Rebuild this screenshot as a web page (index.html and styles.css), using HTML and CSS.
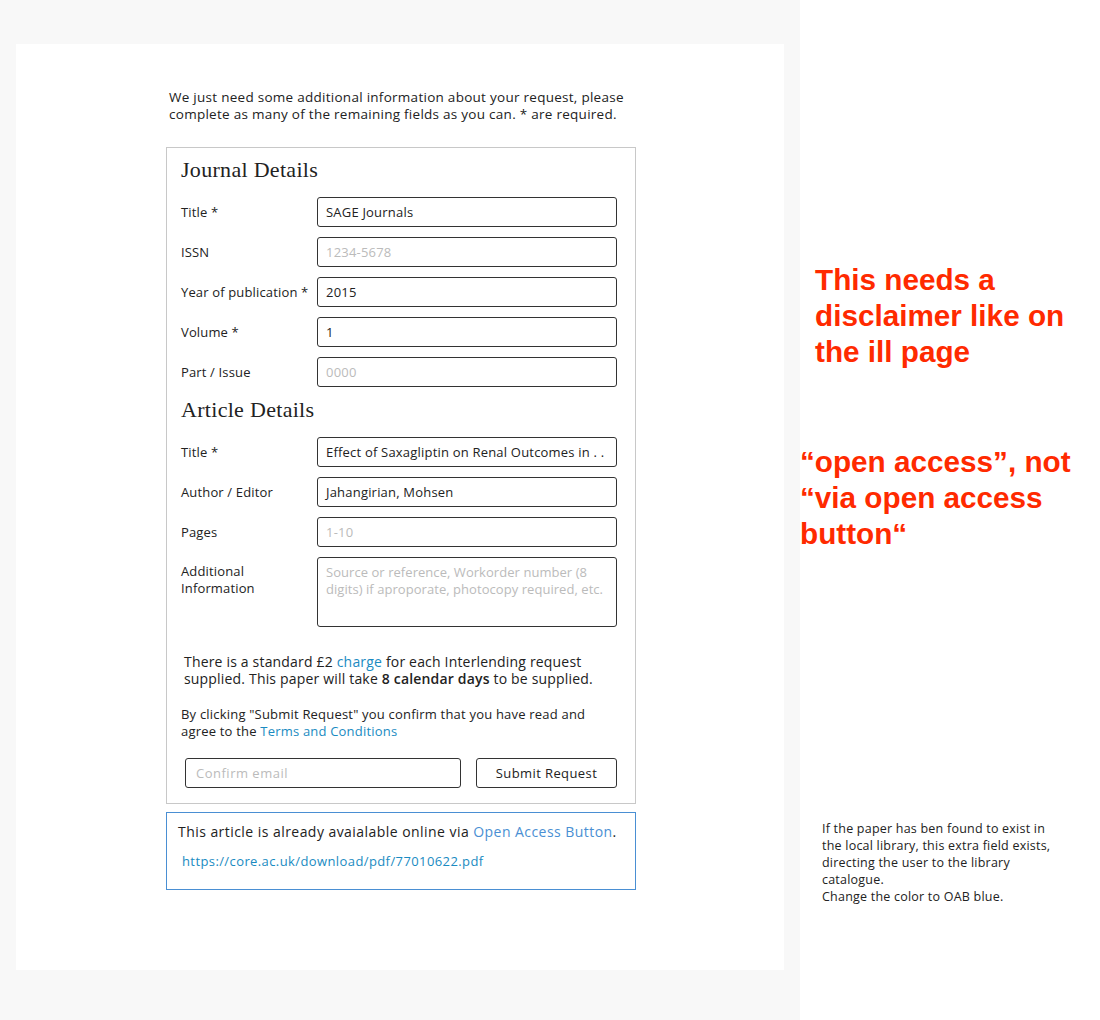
FILE: index.html
```html
<!DOCTYPE html>
<html>
<head>
<meta charset="utf-8">
<link rel="stylesheet" href="styles.css">
</head>
<body>
<div class="page">
  <div class="canvas">
    <div class="card">
      <div class="form-wrap">
        <p class="intro">We just need some additional information about your request, please<br>complete as many of the remaining fields as you can. * are required.</p>
        <div class="form-box">
          <h2 class="section">Journal Details</h2>
          <div class="rows">
            <div class="row"><span class="label">Title *</span><div class="field">SAGE Journals</div></div>
            <div class="row"><span class="label">ISSN</span><div class="field ph">1234-5678</div></div>
            <div class="row"><span class="label">Year of publication *</span><div class="field">2015</div></div>
            <div class="row"><span class="label">Volume *</span><div class="field">1</div></div>
            <div class="row"><span class="label">Part / Issue</span><div class="field ph">0000</div></div>
          </div>
          <h2 class="section second">Article Details</h2>
          <div class="rows">
            <div class="row"><span class="label">Title *</span><div class="field">Effect of Saxagliptin on Renal Outcomes in . .</div></div>
            <div class="row"><span class="label">Author / Editor</span><div class="field">Jahangirian, Mohsen</div></div>
            <div class="row"><span class="label">Pages</span><div class="field ph">1-10</div></div>
            <div class="row tall"><span class="label">Additional<br>Information</span><div class="field area ph">Source or reference, Workorder number (8<br>digits) if aproporate, photocopy required, etc.</div></div>
          </div>
          <p class="charge">There is a standard £2 <a class="link">charge</a> for each Interlending request<br>supplied. This paper will take <b>8 calendar days</b> to be supplied.</p>
          <p class="terms">By clicking "Submit Request" you confirm that you have read and<br>agree to the <a class="link">Terms and Conditions</a></p>
          <div class="submit-row">
            <div class="field ph email">Confirm email</div>
            <div class="button">Submit Request</div>
          </div>
        </div>
        <div class="oab-box">
          <p class="oab-text">This article is already avaialable online via <a class="oab-link">Open Access Button</a>.</p>
          <a class="link url">https://core.ac.uk/download/pdf/77010622.pdf</a>
        </div>
      </div>
    </div>
  </div>
  <div class="notes">
    <p class="red first">This needs a<br>disclaimer like on<br>the ill page</p>
    <p class="red second">“open access”, not<br>“via open access<br>button“</p>
    <p class="note">If the paper has ben found to exist in<br>the local library, this extra field exists,<br>directing the user to the library<br>catalogue.<br>Change the color to OAB blue.</p>
  </div>
</div>
</body>
</html>
```

FILE: styles.css
```css
html, body {
  margin: 0;
  padding: 0;
  background: #ffffff;
}
body {
  font-family: "Open Sans", Lato, sans-serif;
  color: #222;
  letter-spacing: 0.2px;
}
p { margin: 0; }
.page {
  display: flex;
  width: 1100px;
  height: 1020px;
}
.canvas {
  width: 800px;
  background: #f8f8f8;
  padding: 44px 16px 50px 16px;
  box-sizing: border-box;
}
.card {
  background: #fff;
  height: 926px;
  padding: 45px 0 0 150px;
  box-sizing: border-box;
}
.form-wrap {
  width: 470px;
}
.intro {
  font-size: 13.5px;
  line-height: 17px;
  letter-spacing: 0.27px;
  padding-left: 3px;
  margin-bottom: 24px;
  white-space: nowrap;
}
.form-box {
  border: 1px solid #c8c8c8;
  padding: 9px 18px 15px 14px;
}
.section {
  font-family: "Liberation Serif", "DejaVu Serif", serif;
  font-weight: normal;
  font-size: 22px;
  line-height: 26px;
  letter-spacing: 0.3px;
  margin: 0 0 14px 0;
  color: #222;
}
.section.second {
  margin-top: 10px;
}
.rows {
  display: flex;
  flex-direction: column;
  gap: 10px;
}
.row {
  display: flex;
  align-items: center;
}
.row.tall {
  align-items: flex-start;
}
.row.tall .label {
  padding-top: 6px;
  line-height: 17px;
}
.label {
  width: 136px;
  font-size: 13px;
  letter-spacing: 0.15px;
  white-space: nowrap;
}
.field {
  width: 300px;
  height: 30px;
  box-sizing: border-box;
  border: 1px solid #333;
  border-radius: 3px;
  padding: 0 8px;
  font-size: 13px;
  line-height: 28px;
  white-space: nowrap;
  overflow: hidden;
  color: #222;
}
.field.ph {
  color: #bbb;
}
.field.area {
  height: 70px;
  line-height: 17px;
  padding-top: 6px;
  padding-right: 0;
  letter-spacing: 0.05px;
}
.charge {
  margin: 26px 0 0 3px;
  font-size: 14px;
  line-height: 17px;
  letter-spacing: 0.18px;
  color: #222;
  white-space: nowrap;
}
.charge b {
  font-weight: 600;
}
.terms {
  margin-top: 19px;
  font-size: 13px;
  line-height: 17px;
  white-space: nowrap;
}
.link {
  color: #1a8bc2;
  text-decoration: none;
}
.submit-row {
  display: flex;
  justify-content: space-between;
  margin: 18px 0 0 4px;
}
.field.email {
  width: 276px;
  padding-left: 10px;
  letter-spacing: 0.5px;
}
.button {
  width: 141px;
  height: 30px;
  box-sizing: border-box;
  border: 1px solid #333;
  border-radius: 3px;
  text-align: center;
  font-size: 13px;
  line-height: 28px;
  letter-spacing: 0.4px;
}
.oab-box {
  margin-top: 8px;
  border: 1px solid #4a8fd3;
  height: 78px;
  box-sizing: border-box;
  padding: 10px 11px 0 11px;
}
.oab-text {
  font-size: 14px;
  line-height: 18px;
  letter-spacing: 0.45px;
  white-space: nowrap;
}
.oab-link {
  color: #4a8fd3;
}
.url {
  display: block;
  margin: 11px 0 0 4px;
  font-size: 13px;
  line-height: 18px;
  letter-spacing: 0.4px;
}
.notes {
  flex: 1;
  padding-top: 262px;
}
.red {
  font-family: "Liberation Sans", Arial, sans-serif;
  font-weight: bold;
  font-size: 29.7px;
  line-height: 36px;
  letter-spacing: 0;
  color: #ff2a00;
  white-space: nowrap;
}
.red.first {
  margin-left: 15px;
}
.red.second {
  margin-top: 74px;
}
.note {
  margin: 268px 0 0 22px;
  font-size: 12.5px;
  line-height: 17px;
  letter-spacing: 0.22px;
  color: #222;
  white-space: nowrap;
}
```
